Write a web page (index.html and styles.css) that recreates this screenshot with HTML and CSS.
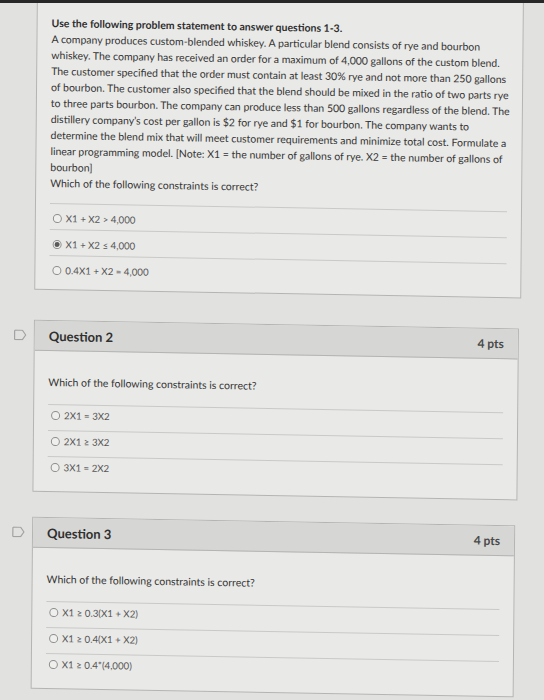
FILE: index.html
```html
<!DOCTYPE html>
<html lang="en">
<head>
<meta charset="utf-8">
<title>Quiz</title>
<link rel="stylesheet" href="styles.css">
</head>
<body>
<div class="topbar"></div>
<main class="sheet">
  <section class="qrow qrow-first">
    <div class="flag-slot"></div>
    <div class="card card-first">
      <div class="body body-first">
        <p class="stem"><strong>Use the following problem statement to answer questions 1-3.</strong><br>A company produces custom-blended whiskey. A particular blend consists of rye and bourbon<br>whiskey. The company has received an order for a maximum of 4,000 gallons of the custom blend.<br>The customer specified that the order must contain at least 30% rye and not more than 250 gallons<br>of bourbon. The customer also specified that the blend should be mixed in the ratio of two parts rye<br>to three parts bourbon. The company can produce less than 500 gallons regardless of the blend. The<br>distillery company’s cost per gallon is $2 for rye and $1 for bourbon. The company wants to<br>determine the blend mix that will meet customer requirements and minimize total cost. Formulate a<br>linear programming model. [Note: X1 = the number of gallons of rye. X2 = the number of gallons of<br>bourbon]<br>Which of the following constraints is correct?</p>
        <ul class="answers">
          <li class="answer"><span class="radio"></span><span class="label">X1 + X2 &gt; 4,000</span></li>
          <li class="answer"><span class="radio radio-on"></span><span class="label">X1 + X2 ≤ 4,000</span></li>
          <li class="answer"><span class="radio"></span><span class="label">0.4X1 + X2 = 4,000</span></li>
        </ul>
      </div>
    </div>
  </section>

  <section class="qrow">
    <div class="flag-slot">
      <svg class="flag" viewBox="0 0 13 11" width="13" height="11"><path d="M1.6 0.8 H8.6 L11.9 5.5 L8.6 10.2 H1.6 Q0.8 10.2 0.8 9.4 V1.6 Q0.8 0.8 1.6 0.8 Z" fill="none" stroke="#a2a2a2" stroke-width="1.2" stroke-linejoin="round"/></svg>
    </div>
    <div class="card">
      <header class="head"><h2 class="title">Question 2</h2><span class="pts">4 pts</span></header>
      <div class="body">
        <p class="prompt">Which of the following constraints is correct?</p>
        <ul class="answers">
          <li class="answer"><span class="radio"></span><span class="label">2X1 = 3X2</span></li>
          <li class="answer"><span class="radio"></span><span class="label">2X1 ≥ 3X2</span></li>
          <li class="answer"><span class="radio"></span><span class="label">3X1 = 2X2</span></li>
        </ul>
      </div>
    </div>
  </section>

  <section class="qrow">
    <div class="flag-slot">
      <svg class="flag" viewBox="0 0 13 11" width="13" height="11"><path d="M1.6 0.8 H8.6 L11.9 5.5 L8.6 10.2 H1.6 Q0.8 10.2 0.8 9.4 V1.6 Q0.8 0.8 1.6 0.8 Z" fill="none" stroke="#a2a2a2" stroke-width="1.2" stroke-linejoin="round"/></svg>
    </div>
    <div class="card card-last">
      <header class="head"><h2 class="title">Question 3</h2><span class="pts">4 pts</span></header>
      <div class="body">
        <p class="prompt">Which of the following constraints is correct?</p>
        <ul class="answers">
          <li class="answer"><span class="radio"></span><span class="label">X1 ≥ 0.3(X1 + X2)</span></li>
          <li class="answer"><span class="radio"></span><span class="label">X1 ≥ 0.4(X1 + X2)</span></li>
          <li class="answer"><span class="radio"></span><span class="label">X1 ≥ 0.4*(4,000)</span></li>
        </ul>
      </div>
    </div>
  </section>
</main>
</body>
</html>
```

FILE: styles.css
```css
html, body {
  margin: 0;
  padding: 0;
}
body {
  background: #e1e1df;
  font-family: Lato, "Noto Sans", "Liberation Sans", sans-serif;
  color: #333;
  overflow: hidden;
  height: 700px;
}
.topbar {
  position: relative;
  z-index: 2;
  height: 3px;
  background: #272727;
}
.sheet {
  margin-top: -23px;
  padding-left: 17px;
  transform: matrix(1, 0.018, -0.009, 1, 0, 0);
  transform-origin: 0 0;
  display: flex;
  flex-direction: column;
  gap: 25px;
}
.qrow {
  display: flex;
  gap: 7px;
  align-items: flex-start;
}
.qrow-first {
  margin-bottom: 5px;
}
.flag-slot {
  width: 13px;
  height: 30px;
  flex: none;
  display: flex;
  align-items: center;
}
.flag {
  display: block;
}
.card {
  width: 485px;
  background: #e9e9e7;
  border: 1px solid #b4b4b2;
  box-sizing: border-box;
}
.card-first {
  width: 487px;
}
.card-last {
  width: 483px;
}
.head {
  height: 30px;
  box-sizing: border-box;
  background: #d6d6d4;
  border-bottom: 1px solid #b4b4b2;
  display: flex;
  align-items: center;
  justify-content: space-between;
  padding: 0 14px;
}
.title {
  margin: 0;
  font-size: 13px;
  font-weight: 700;
  color: #303030;
}
.pts {
  font-size: 12px;
  font-weight: 700;
  color: #4a4a4a;
}
.body {
  padding: 23px 14px 9px;
}
.body-first {
  padding-top: 33px;
  padding-bottom: 8px;
}
.stem, .prompt {
  margin: 0;
  font-size: 10.5px;
  line-height: 16px;
  color: #353535;
  white-space: nowrap;
}
.stem strong {
  font-weight: 700;
  color: #2e2e2e;
}
.answers {
  list-style: none;
  margin: 14px 0 0;
  padding: 0;
}
.body-first .answers {
  margin-top: 12px;
}
.answer {
  height: 26px;
  box-sizing: border-box;
  border-top: 1px solid #c9c9c7;
  display: flex;
  align-items: center;
  gap: 4px;
  padding: 0 0 5px 3px;
}
.body-first .answer {
  padding: 3px 0 0 3px;
}
.radio {
  width: 9px;
  height: 9px;
  box-sizing: border-box;
  border: 1px solid #8e8e8e;
  border-radius: 50%;
  background: #efefed;
  display: flex;
  align-items: center;
  justify-content: center;
  flex: none;
}
.radio-on::after {
  content: "";
  width: 5px;
  height: 5px;
  border-radius: 50%;
  background: #5a5a5a;
}
.label {
  font-size: 9.7px;
  line-height: 11px;
  color: #555;
}
```
